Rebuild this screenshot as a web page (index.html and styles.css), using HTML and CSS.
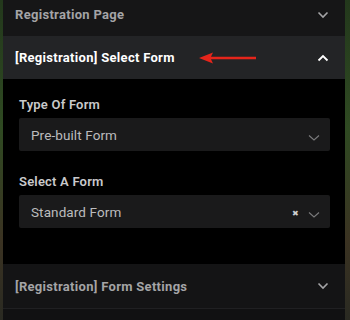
FILE: index.html
```html
<!DOCTYPE html>
<html>
<head>
  <title>Registration settings</title>
  <link rel="stylesheet" href="styles.css">
</head>
<body>
  <div class="panel">
    <div class="section-head section-head--cut">
      <span class="section-title">Registration Page</span>
      <svg class="chevron" width="12" height="8" viewBox="0 0 12 8"><path d="M1.5 1.5 L6 6 L10.5 1.5" fill="none" stroke="currentColor" stroke-width="1.6"/></svg>
    </div>

    <div class="section-head section-head--open">
      <span class="section-title">[Registration] Select Form</span>
      <svg class="pointer" width="58" height="12" viewBox="0 0 58 12"><path d="M0 6 L14 0.5 L12 4.8 L57 4.8 L57 7.2 L12 7.2 L14 11.5 Z" fill="#e5251b"/></svg>
      <svg class="chevron chevron--up" width="12" height="8" viewBox="0 0 12 8"><path d="M1.5 6.5 L6 2 L10.5 6.5" fill="none" stroke="currentColor" stroke-width="1.8"/></svg>
    </div>

    <div class="section-body">
      <div class="field">
        <label class="field-label">Type Of Form</label>
        <div class="select">
          <span class="select-value">Pre-built Form</span>
          <svg class="select-arrow" width="12" height="8" viewBox="0 0 12 8"><path d="M1 1.5 L6 6 L11 1.5" fill="none" stroke="currentColor" stroke-width="1.1"/></svg>
        </div>
      </div>

      <div class="field">
        <label class="field-label">Select A Form</label>
        <div class="select">
          <span class="select-value">Standard Form</span>
          <span class="select-clear">&#10006;</span>
          <svg class="select-arrow" width="12" height="8" viewBox="0 0 12 8"><path d="M1 1.5 L6 6 L11 1.5" fill="none" stroke="currentColor" stroke-width="1.1"/></svg>
        </div>
      </div>
    </div>

    <div class="section-head">
      <span class="section-title">[Registration] Form Settings</span>
      <svg class="chevron" width="12" height="8" viewBox="0 0 12 8"><path d="M1.5 1.5 L6 6 L10.5 1.5" fill="none" stroke="currentColor" stroke-width="1.6"/></svg>
    </div>
    <div class="section-head section-head--next"></div>
  </div>
</body>
</html>
```

FILE: styles.css
```css
body {
  margin: 0;
  height: 100vh;
  overflow: hidden;
  background: linear-gradient(to bottom, #23381c, #2f4a22 40%, #3b3322 75%, #2a2a22);
  font-family: Roboto, "Liberation Sans", sans-serif;
}

.panel {
  margin: 0 5px 0 3px;
  height: 100%;
  overflow: hidden;
  background: #000;
}

.section-head {
  display: flex;
  align-items: center;
  height: 44px;
  padding: 0 16px 0 12px;
  background: #141415;
  border-bottom: 1px solid #202022;
  color: #a4a4a6;
}

.section-head--cut {
  box-sizing: border-box;
  height: 36px;
  padding-top: 7px;
  align-items: flex-start;
  background: #161617;
  border-bottom: none;
}

.section-head--open {
  height: 43px;
  background: #232426;
  color: #fff;
  border-bottom: none;
}

.section-head--next {
  background: #111112;
  border-bottom: none;
}

.section-title {
  font-size: 13px;
  font-weight: 700;
  letter-spacing: 0.3px;
}

.pointer {
  margin-left: 24px;
}

.chevron {
  margin-left: auto;
}

.section-head--cut .chevron {
  margin-top: 4px;
}

.section-body {
  padding: 18px 15px 36px 16px;
}

.field + .field {
  margin-top: 23px;
}

.field-label {
  display: block;
  font-size: 13px;
  font-weight: 600;
  letter-spacing: 0.2px;
  color: #c9c9cb;
  margin-bottom: 6px;
}

.select {
  display: flex;
  align-items: center;
  height: 33px;
  padding: 0 10px 0 12px;
  background: #1a1a1b;
  border-radius: 2px;
  color: #bcbcbe;
}

.select-value {
  font-size: 13.5px;
  letter-spacing: 0.1px;
}

.select-clear {
  margin-left: auto;
  font-size: 8px;
  color: #cfcfd1;
  margin-top: 4px;
}

.select-arrow {
  margin-left: auto;
  margin-top: 6px;
  color: #7a7a7c;
}

.select-clear + .select-arrow {
  margin-left: 9px;
}
```
